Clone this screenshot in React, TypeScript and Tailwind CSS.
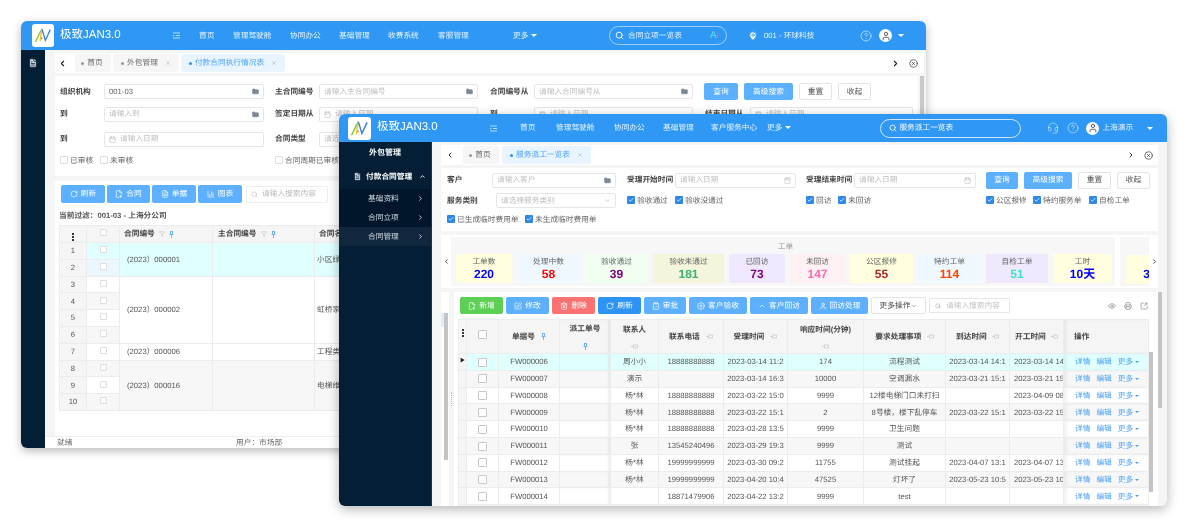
/**
 * Two overlapping ERP windows (contract report behind, service dispatch list in front)
 */

import type { ReactNode } from 'react';
import {
    Calendar,
    ChevronDown,
    ChevronLeft,
    ChevronRight,
    ChevronUp,
    CircleHelp,
    Eye,
    FilePlus2,
    FileText,
    Folder,
    CirclePlus,
    ClipboardCheck,
    Trash2,
    Printer,
    RotateCw,
    Search,
    SquareArrowOutUpRight,
    SquarePen,
    User,
    BarChart3,
    MapPin,
    Filter,
    Check,
    CircleX,
    X,
    Headset,
} from 'lucide-react';

function Logo({ size }: { size: string }) {
    return (
        <div className={`${size} shrink-0 rounded-[3px] bg-white flex items-center justify-center`}>
            <svg viewBox="0 0 24 24" className="w-[90%] h-[90%]" fill="none">
                <path d="M3 20 C6 14 8 9 11 4" stroke="#8cc63f" strokeWidth="1.7" />
                <path d="M10.5 5 C9.5 10 9.5 14 8.5 19" stroke="#f0c419" strokeWidth="1.6" />
                <circle cx="10.5" cy="15.5" r="1.1" fill="#f07a20" />
                <path d="M11 5 L15 18 C17 14 19 9 21 5" stroke="#3b86dd" strokeWidth="1.7" />
            </svg>
        </div>
    );
}

function Avatar() {
    return (
        <div className="w-[13px] h-[13px] rounded-full bg-white flex items-center justify-center">
            <User size={10} strokeWidth={2.2} className="text-[#555]" />
        </div>
    );
}

function Caret() {
    return <span className="inline-block w-0 h-0 border-x-[3px] border-x-transparent border-t-[3px] border-t-white" />;
}

function MenuIcon() {
    return (
        <svg width="7" height="7" viewBox="0 0 7 7" stroke="#d8ecff" strokeWidth="0.8">
            <path d="M0 1h7M3 3.5h4M0 3.5h1.5M0 6h7" />
        </svg>
    );
}

function PinIcon() {
    return (
        <svg width="5" height="7" viewBox="0 0 5 7" fill="none" stroke="#58a6ee" strokeWidth="0.8" className="inline-block">
            <path d="M1 .5h3M1.5.5v3M3.5.5v3M.5 3.5h4M2.5 3.5V7" />
        </svg>
    );
}

function UnpinIcon() {
    return (
        <svg width="7" height="5" viewBox="0 0 7 5" fill="none" stroke="#c4c4c4" strokeWidth="0.7" className="inline-block">
            <path d="M0 2.5h2.5M2.5 1h4v3h-4z" />
        </svg>
    );
}

function DotsIcon() {
    return (
        <span className="inline-flex flex-col gap-[1px]">
            <span className="w-[2px] h-[2px] bg-[#333]" />
            <span className="w-[2px] h-[2px] bg-[#333]" />
            <span className="w-[2px] h-[2px] bg-[#333]" />
        </span>
    );
}

function Tab({ label, closable, active, width }: { label: string; closable?: boolean; active?: boolean; width: string }) {
    return (
        <div
            className={`${width} h-[18px] rounded-[3px] flex items-center justify-center gap-[3px] text-[7.7px] ${active ? 'bg-[#e8f4ff] text-[#4aa3f5]' : 'bg-[#f6f6f6] text-[#666]'}`}
        >
            <span className={`w-[3px] h-[3px] rounded-full ${active ? 'bg-[#2d94f3]' : 'bg-[#999]'}`} />
            <span className="mr-[2px]">{label}</span>
            {closable && <X size={6} className="text-[#aaa] ml-[2px]" />}
        </div>
    );
}

function Field({
    width,
    placeholder,
    icon,
    value,
}: {
    width: string;
    placeholder?: string;
    icon?: 'folder' | 'date' | 'down' | 'leading';
    value?: string;
}) {
    return (
        <div className={`${width} h-[15px] shrink-0 rounded-[2px] border border-[#e6e6e6] bg-white px-[4px] flex items-center gap-[4px] text-[7.7px]`}>
            {icon === 'leading' && <Calendar size={7} className="text-[#bbb] shrink-0" />}
            <span className={`flex-1 truncate ${value ? 'text-[#666]' : 'text-[#c0c0c0]'}`}>{value ?? placeholder}</span>
            {icon === 'folder' && <Folder size={7} fill="#7c8794" className="text-[#7c8794] shrink-0" />}
            {icon === 'date' && <Calendar size={7} className="text-[#bbb] shrink-0" />}
            {icon === 'down' && <ChevronDown size={7} className="text-[#aaa] shrink-0" />}
        </div>
    );
}

function Label({ children, width }: { children: ReactNode; width: string }) {
    return <div className={`${width} shrink-0 text-[7.7px] font-bold text-[#444] whitespace-nowrap`}>{children}</div>;
}

function Btn({
    width,
    tone = 'light',
    height = 'h-[17px]',
    icon,
    children,
}: {
    width: string;
    tone?: 'light' | 'white' | 'green' | 'red' | 'blue';
    height?: string;
    icon?: ReactNode;
    children: ReactNode;
}) {
    const tones = {
        light: 'bg-[#5cb0fd] text-white',
        white: 'bg-white border border-[#e4e4e4] text-[#555]',
        green: 'bg-[#5dcf55] text-white',
        red: 'bg-[#fb7272] text-white',
        blue: 'bg-[#2d94f3] text-white',
    };
    return (
        <div className={`${width} ${height} ${tones[tone]} shrink-0 rounded-[2px] flex items-center justify-center gap-[3px] text-[7.7px]`}>
            {icon}
            {children}
        </div>
    );
}

function Box({ checked, size = 'w-[8px] h-[8px]' }: { checked?: boolean; size?: string }) {
    if (checked) {
        return (
            <span className="w-[8px] h-[8px] shrink-0 rounded-[1px] bg-[#2d89e8] flex items-center justify-center">
                <Check size={6} strokeWidth={3} className="text-white" />
            </span>
        );
    }
    return <span className={`${size} shrink-0 inline-block rounded-[1px] border border-[#dedede] bg-white`} />;
}

function Check2({ label, checked = true, width }: { label: string; checked?: boolean; width?: string }) {
    return (
        <div className={`${width ?? ''} flex items-center gap-[2px] text-[7.7px] text-[#666] whitespace-nowrap`}>
            <Box checked={checked} />
            <span>{label}</span>
        </div>
    );
}

const BACK_NAV = [
    ['首页', 'w-[34px]'],
    ['管理驾驶舱', 'w-[57px]'],
    ['协同办公', 'w-[49px]'],
    ['基础管理', 'w-[49px]'],
    ['收费系统', 'w-[50px]'],
    ['客服管理', 'w-[48px]'],
];

const BACK_GROUPS = [
    { rows: [1, 2], code: '(2023）000001', name: '小区绿', tone: 'bg-[#e0ffff]' },
    { rows: [3, 4, 5, 6], code: '(2023）000002', name: '虹桥家', tone: 'bg-white' },
    { rows: [7], code: '(2023）000006', name: '工程类', tone: 'bg-white' },
    { rows: [8, 9, 10], code: '(2023）000016', name: '电梯维', tone: 'bg-[#f7f7f7]' },
];

function BackWindow() {
    return (
        <div className="absolute left-[21px] top-[21px] w-[905px] h-[427px] rounded-[6px] overflow-hidden bg-[#f5f5f5] shadow-[0_3px_10px_rgba(0,0,0,0.28)] flex flex-col">
            <div className="h-[29px] shrink-0 bg-[#2e98f4] flex items-center text-white">
                <div className="ml-[11px]">
                    <Logo size="w-[22px] h-[23px]" />
                </div>
                <div className="ml-[6px] w-[110px] text-[11.5px] whitespace-nowrap">极致JAN3.0</div>
                <div className="w-[15px] ml-[3px] flex">
                    <MenuIcon />
                </div>
                <div className="flex text-[7.7px] ml-[11px] text-[#e8f4ff]">
                    {BACK_NAV.map(([name, w]) => (
                        <div key={name} className={w}>{name}</div>
                    ))}
                </div>
                <div className="ml-[27px] w-[54px] flex items-center gap-[3px] text-[7.7px] text-[#e8f4ff]">更多<Caret /></div>
                <div className="ml-[42px] w-[118px] h-[19px] rounded-full border border-[#9ccdf8] flex items-center px-[5px] gap-[4px] text-[7.7px]">
                    <Search size={9} strokeWidth={2.4} />
                    <span className="flex-1 text-[#e8f4ff]">合同立项一览表</span>
                    <span className="text-[10px] text-[#5fe0e8] mr-[2px]">A<span className="text-[#e86a8a]">i</span></span>
                </div>
                <MapPin size={10} fill="white" className="ml-[21px] text-[#2e98f4]" />
                <span className="ml-[6px] w-[96px] text-[7.7px] text-[#e8f4ff]">001 - 环球科技</span>
                <CircleHelp size={12} strokeWidth={1.3} className="text-[#e8f4ff]" />
                <div className="ml-[7px]"><Avatar /></div>
                <div className="ml-[6px] flex"><Caret /></div>
            </div>

            <div className="flex-1 flex min-h-0">
                <div className="w-[24px] shrink-0 bg-[#041e36] flex justify-center pt-[8px]">
                    <FileText size={10} fill="#dfe6ee" className="text-[#041e36]" />
                </div>

                <div className="flex-1 min-w-0 flex flex-col">
                    <div className="flex-1 min-h-0 pl-[10px] pr-[2px] pt-[3px] flex flex-col">
                        <div className="h-[20px] w-[869px] shrink-0 bg-white flex items-center">
                            <ChevronLeft size={9} strokeWidth={3} className="ml-[3px] mr-[8px] text-[#222]" />
                            <div className="flex gap-[2px]">
                                <Tab label="首页" width="w-[36px]" />
                                <Tab label="外包管理" width="w-[66px]" closable />
                                <Tab label="付款合同执行情况表" width="w-[104px]" closable active />
                            </div>
                            <div className="flex-1" />
                            <ChevronRight size={9} strokeWidth={3} className="mr-[9px] text-[#222]" />
                            <CircleX size={9} className="mr-[6px] text-[#444]" />
                        </div>

                        <div className="mt-[3px] flex-1 min-h-0 flex">
                            <div className="w-[863px] flex flex-col">
                                <div className="h-[100px] shrink-0 bg-white pl-[5px] pt-[6px] flex flex-col">
                                    <div className="flex items-center h-[19px]">
                                        <Label width="w-[44px]">组织机构</Label>
                                        <Field width="w-[160px]" value="001-03" icon="folder" />
                                        <Label width="w-[44px] ml-[11px]">主合同编号</Label>
                                        <Field width="w-[159px]" placeholder="请输入主合同编号" icon="folder" />
                                        <Label width="w-[44px] ml-[12px]">合同编号从</Label>
                                        <Field width="w-[159px]" placeholder="请输入合同编号从" icon="folder" />
                                        <div className="ml-[11px] flex gap-[6px] items-center">
                                            <Btn width="w-[34px]">查询</Btn>
                                            <Btn width="w-[49px]">高级搜索</Btn>
                                            <Btn width="w-[33px]" tone="white">重置</Btn>
                                            <Btn width="w-[33px]" tone="white">收起</Btn>
                                        </div>
                                    </div>
                                    <div className="flex items-center h-[24px] mt-[1px]">
                                        <Label width="w-[44px]">到</Label>
                                        <Field width="w-[160px]" placeholder="请输入到" icon="folder" />
                                        <Label width="w-[44px] ml-[11px]">签定日期从</Label>
                                        <Field width="w-[159px]" placeholder="请输入日期" icon="leading" />
                                        <Label width="w-[44px] ml-[12px]">到</Label>
                                        <Field width="w-[159px]" placeholder="请输入日期" icon="leading" />
                                        <Label width="w-[45px] ml-[12px]">结束日期从</Label>
                                        <Field width="w-[163px]" placeholder="请输入日期" icon="leading" />
                                    </div>
                                    <div className="flex items-center h-[24px] mt-[1px]">
                                        <Label width="w-[44px]">到</Label>
                                        <Field width="w-[160px]" placeholder="请输入日期" icon="leading" />
                                        <Label width="w-[44px] ml-[11px]">合同类型</Label>
                                        <Field width="w-[159px]" placeholder="请选择" />
                                    </div>
                                    <div className="flex items-center h-[17px] mt-[1px]">
                                        <Check2 label="已审核" checked={false} width="w-[40px]" />
                                        <Check2 label="未审核" checked={false} width="w-[175px]" />
                                        <Check2 label="合同周期已审核" checked={false} />
                                    </div>
                                </div>

                                <div className="mt-[5px] flex-1 min-h-0 bg-white pl-[6px] pt-[4px]">
                                    <div className="flex items-center gap-[2px]">
                                        <Btn width="w-[44px]" height="h-[18px]" icon={<RotateCw size={8} />}>刷新</Btn>
                                        <Btn width="w-[43px]" height="h-[18px]" icon={<FilePlus2 size={8} />}>合同</Btn>
                                        <Btn width="w-[44px]" height="h-[18px]" icon={<FileText size={8} />}>单据</Btn>
                                        <Btn width="w-[44px]" height="h-[18px]" icon={<BarChart3 size={8} />}>图表</Btn>
                                        <div className="ml-[2px] w-[82px] h-[17px] border border-[#eee] rounded-[2px] flex items-center gap-[4px] px-[4px] text-[7.7px] text-[#bbb]">
                                            <Search size={7} />
                                            请输入搜索内容
                                        </div>
                                    </div>
                                    <div className="mt-[6px] h-[13px] text-[7.7px] font-bold text-[#555] -ml-[2px] flex items-center">当前过滤：001-03 - 上海分公司</div>
                                    <table className="mt-[3px] -ml-[2px] table-fixed border-collapse text-[7.7px] text-[#555]">
                                        <colgroup>
                                            <col className="w-[27px]" />
                                            <col className="w-[33px]" />
                                            <col className="w-[93px]" />
                                            <col className="w-[102px]" />
                                            <col className="w-[80px]" />
                                        </colgroup>
                                        <thead>
                                            <tr className="h-[17px] bg-[#f5f5f5]">
                                                <th className="border border-[#ececec]"><DotsIcon /></th>
                                                <th className="border border-[#ececec]"><Box size="w-[7px] h-[7px]" /></th>
                                                <th className="border border-[#ececec] text-left pl-[4px] font-bold text-[#444]">合同编号 <Filter size={6} className="inline text-[#bbb] mx-[2px]" /> <PinIcon /></th>
                                                <th className="border border-[#ececec] text-left pl-[5px] font-bold text-[#444]">主合同编号 <Filter size={6} className="inline text-[#bbb] mx-[2px]" /> <PinIcon /></th>
                                                <th className="border border-[#ececec] text-left pl-[4px] font-bold text-[#444]">合同名称</th>
                                            </tr>
                                        </thead>
                                        <tbody>
                                            {BACK_GROUPS.flatMap((g) =>
                                                g.rows.map((n, i) => (
                                                    <tr key={n} className="h-[16.8px]">
                                                        <td className="border border-[#ececec] bg-[#f5f5f5] text-center">{n}</td>
                                                        <td className={`border border-[#ececec] text-center ${n === 1 ? 'bg-[#e0ffff]' : n === 2 ? 'bg-[#ebf6ff]' : n % 2 === 0 ? 'bg-[#f7f7f7]' : 'bg-white'}`}>
                                                            <Box size="w-[7px] h-[7px]" />
                                                        </td>
                                                        {i === 0 && (
                                                            <>
                                                                <td rowSpan={g.rows.length} className={`border border-[#ececec] pl-[7px] ${g.tone}`}>{g.code}</td>
                                                                <td rowSpan={g.rows.length} className={`border border-[#ececec] ${g.tone}`} />
                                                                <td rowSpan={g.rows.length} className={`border border-[#ececec] pl-[2px] ${g.tone}`}>{g.name}</td>
                                                            </>
                                                        )}
                                                    </tr>
                                                ))
                                            )}
                                        </tbody>
                                    </table>
                                </div>
                            </div>
                            <div className="ml-[2px] w-[4px] shrink-0"><div className="h-[70px] bg-[#c8c8c8]" /></div>
                        </div>
                    </div>
                    <div className="h-[12px] shrink-0 bg-white border-t border-[#eee] flex items-center pl-[12px] text-[7.7px] text-[#666]">
                        <span className="w-[179px]">就绪</span>
                        <span>用户：市场部</span>
                    </div>
                </div>
            </div>
        </div>
    );
}

const STATS = [
    { label: '工单数', value: '220', color: 'text-[#0000ff]', bg: 'bg-[#ffffe0]', w: 'w-[56px]' },
    { label: '处理中数', value: '58', color: 'text-[#ff0000]', bg: 'bg-[#f0f8ff]', w: 'w-[63px]' },
    { label: '验收通过', value: '39', color: 'text-[#800080]', bg: 'bg-[#f0fff0]', w: 'w-[63px]' },
    { label: '验收未通过', value: '181', color: 'text-[#3cb371]', bg: 'bg-[#f5f5dc]', w: 'w-[71px]' },
    { label: '已回访', value: '73', color: 'text-[#800080]', bg: 'bg-[#f0e8fd]', w: 'w-[56px]' },
    { label: '未回访', value: '147', color: 'text-[#ff69b4]', bg: 'bg-[#fff0f3]', w: 'w-[55px]' },
    { label: '公区报修', value: '55', color: 'text-[#a52a2a]', bg: 'bg-[#ffffe0]', w: 'w-[63px]' },
    { label: '特约工单', value: '114', color: 'text-[#ff4500]', bg: 'bg-[#f0f8ff]', w: 'w-[63px]' },
    { label: '自检工单', value: '51', color: 'text-[#40e0d0]', bg: 'bg-[#f0e8fd]', w: 'w-[62px]' },
    { label: '工时', value: '10天', color: 'text-[#0000ff]', bg: 'bg-[#ffffe0]', w: 'w-[59px]' },
];

const ROWS = [
    ['FW000006', '周小小', '18888888888', '2023-03-14 11:2', '174', '流程测试', '2023-03-14 14:1', '2023-03-14 14'],
    ['FW000007', '演示', '', '2023-03-14 16:3', '10000', '空调漏水', '2023-03-21 15:1', '2023-03-21 15'],
    ['FW000008', '杨*林', '18888888888', '2023-03-22 15:0', '9999', '12楼电梯门口未打扫', '', '2023-04-09 08'],
    ['FW000009', '杨*林', '18888888888', '2023-03-22 15:1', '2', '8号楼，楼下乱停车', '2023-03-22 15:1', '2023-03-22 15'],
    ['FW000010', '杨*林', '18888888888', '2023-03-28 13:5', '9999', '卫生问题', '', ''],
    ['FW000011', '张', '13545240496', '2023-03-29 19:3', '9999', '测试', '', ''],
    ['FW000012', '杨*林', '19999999999', '2023-03-30 09:2', '11755', '测试挂起', '2023-04-07 13:1', '2023-04-07 13'],
    ['FW000013', '杨*林', '19999999999', '2023-04-20 10:4', '47525', '灯坏了', '2023-05-23 10:5', '2023-05-23 10'],
    ['FW000014', '', '18871479906', '2023-04-22 13:2', '9999', 'test', '', ''],
];

const FRONT_NAV = [
    ['首页', 'w-[36px]'],
    ['管理驾驶舱', 'w-[58px]'],
    ['协同办公', 'w-[49px]'],
    ['基础管理', 'w-[48px]'],
    ['客户服务中心', 'w-[56px]'],
];

function Th({ children, shadow }: { children?: ReactNode; shadow?: boolean }) {
    return (
        <th className={`border border-[#ececec] bg-[#f5f5f5] font-bold text-[#444] text-center overflow-hidden whitespace-nowrap ${shadow ? 'shadow-[inset_-2px_0_2px_rgba(0,0,0,0.06)]' : ''}`}>
            {children}
        </th>
    );
}

function FrontTable() {
    return (
        <table className="table-fixed border-collapse w-[690px] text-[7.7px] text-[#555]">
            <colgroup>
                <col className="w-[8px]" />
                <col className="w-[32px]" />
                <col className="w-[61px]" />
                <col className="w-[51px]" />
                <col className="w-[48px]" />
                <col className="w-[65px]" />
                <col className="w-[64px]" />
                <col className="w-[76px]" />
                <col className="w-[82px]" />
                <col className="w-[64px]" />
                <col className="w-[54px]" />
                <col className="w-[85px]" />
            </colgroup>
            <thead>
                <tr className="h-[34px]">
                    <th className="border border-[#ececec] bg-[#f5f5f5] align-top pt-[3px]"><DotsIcon /></th>
                    <Th><span className="inline-block w-[9px] h-[9px] rounded-[1px] border border-[#c8c8c8] bg-white" /></Th>
                    <Th>单据号 <span className="ml-[4px]"><PinIcon /></span></Th>
                    <Th shadow>
                        <div className="flex flex-col items-center gap-[8px]">派工单号<PinIcon /></div>
                    </Th>
                    <Th>
                        <div className="flex flex-col items-center gap-[8px]">联系人<UnpinIcon /></div>
                    </Th>
                    <Th>联系电话 <span className="ml-[4px]"><UnpinIcon /></span></Th>
                    <Th>受理时间 <span className="ml-[4px]"><UnpinIcon /></span></Th>
                    <Th>
                        <div className="flex flex-col items-center gap-[8px]">响应时间(分钟)<UnpinIcon /></div>
                    </Th>
                    <Th>要求处理事项 <span className="ml-[3px]"><UnpinIcon /></span></Th>
                    <Th>到达时间 <span className="ml-[3px]"><UnpinIcon /></span></Th>
                    <Th>开工时间 <span className="ml-[3px]"><UnpinIcon /></span></Th>
                    <th className="border border-[#ececec] bg-[#f5f5f5] font-bold text-[#444] text-left pl-[10px] shadow-[inset_3px_0_3px_rgba(0,0,0,0.05)]">操作</th>
                </tr>
            </thead>
            <tbody>
                {ROWS.map((r, i) => {
                    const tone = i === 0 ? 'bg-[#e0ffff]' : i % 2 === 1 ? 'bg-[#f7f7f7]' : 'bg-white';
                    return (
                        <tr key={r[0]} className={`h-[16.8px] ${tone}`}>
                            <td className="border border-[#ececec] bg-[#f5f5f5] text-center text-[#222] text-[5px] leading-none">{i === 0 ? '▶' : ''}</td>
                            <td className="border border-[#ececec] text-center"><span className="inline-block w-[9px] h-[9px] rounded-[1px] border border-[#c8c8c8] bg-white align-middle" /></td>
                            <td className="border border-[#ececec] text-center">{r[0]}</td>
                            <td className="border border-[#ececec] shadow-[inset_-2px_0_2px_rgba(0,0,0,0.06)]" />
                            <td className="border border-[#ececec] text-center">{r[1]}</td>
                            <td className="border border-[#ececec] text-center">{r[2]}</td>
                            <td className="border border-[#ececec] text-center overflow-hidden whitespace-nowrap">{r[3]}</td>
                            <td className="border border-[#ececec] text-center">{r[4]}</td>
                            <td className="border border-[#ececec] text-center whitespace-nowrap">{r[5]}</td>
                            <td className="border border-[#ececec] text-center overflow-hidden whitespace-nowrap">{r[6]}</td>
                            <td className="border border-[#ececec] pl-[4px] overflow-hidden whitespace-nowrap">{r[7]}</td>
                            <td className="border border-[#ececec] pl-[11px] text-[#4a9ff0] whitespace-nowrap shadow-[inset_3px_0_3px_rgba(0,0,0,0.05)]">
                                <span>详情</span>
                                <span className="ml-[6px]">编辑</span>
                                <span className="ml-[6px]">更多</span>
                                <span className="ml-[2px] inline-block align-middle w-0 h-0 border-x-[2px] border-x-transparent border-t-[2px] border-t-[#4a9ff0]" />
                            </td>
                        </tr>
                    );
                })}
                <tr className="h-[17px]">
                    <td className="border border-[#ececec] bg-[#f5f5f5]" colSpan={12} />
                </tr>
            </tbody>
        </table>
    );
}

function FrontWindow() {
    return (
        <div className="absolute left-[339px] top-[114px] w-[828px] h-[392px] rounded-[6px] overflow-hidden bg-[#f5f5f5] shadow-[0_3px_12px_rgba(0,0,0,0.3)] flex flex-col">
            <div className="h-[28px] shrink-0 bg-[#2e98f4] flex items-center text-white">
                <div className="ml-[9px]">
                    <Logo size="w-[23px] h-[23px]" />
                </div>
                <div className="ml-[6px] w-[112px] text-[11.5px] whitespace-nowrap">极致JAN3.0</div>
                <div className="w-[25px] ml-[1px] flex"><MenuIcon /></div>
                <div className="flex text-[7.7px] text-[#e8f4ff] ml-[5px]">
                    {FRONT_NAV.map(([name, w]) => (
                        <div key={name} className={w}>{name}</div>
                    ))}
                </div>
                <div className="flex items-center gap-[3px] text-[7.7px] text-[#e8f4ff]">更多<Caret /></div>
                <div className="ml-[89px] w-[141px] h-[19px] rounded-full border border-[#cfe6fb] flex items-center px-[8px] gap-[2px] text-[7.7px]">
                    <Search size={8} strokeWidth={2.5} />
                    <span>服务派工一览表</span>
                </div>
                <Headset size={12} strokeWidth={1.2} className="ml-[26px] text-[#d8ecff]" />
                <CircleHelp size={12} strokeWidth={1.2} className="ml-[8px] text-[#e8f4ff]" />
                <div className="ml-[7px]"><Avatar /></div>
                <span className="ml-[3px] w-[45px] text-[7.7px] text-[#e8f4ff]">上海演示</span>
                <Caret />
            </div>

            <div className="flex-1 min-h-0 flex">
                <div className="w-[93px] shrink-0 bg-[#041e36] text-white flex flex-col border-r border-[#1b3650]">
                    <div className="h-[20px] mt-[1px] flex items-center justify-center text-[8px] font-bold">外包管理</div>
                    <div className="h-[25px] mt-[1px] pl-[14px] flex items-center text-[7.7px] font-bold gap-[4px]">
                        <FileText size={9} fill="#dfe6ee" className="text-[#041e36]" />
                        付款合同管理
                        <ChevronUp size={7} strokeWidth={3} className="ml-[3px]" />
                    </div>
                    <div className="h-[19px] bg-[#02162b] pl-[29px] pr-[7px] flex items-center justify-between text-[7.7px] text-[#d7dee6]">基础资料<ChevronRight size={7} strokeWidth={3} /></div>
                    <div className="h-[19px] bg-[#02162b] pl-[29px] pr-[7px] flex items-center justify-between text-[7.7px] text-[#d7dee6]">合同立项<ChevronRight size={7} strokeWidth={3} /></div>
                    <div className="h-[19px] bg-[#10273e] pl-[29px] pr-[7px] flex items-center justify-between text-[7.7px] text-[#d7dee6]">合同管理<ChevronRight size={7} strokeWidth={3} /></div>
                </div>

                <div className="flex-1 min-w-0 pl-[9px] pt-[3px] flex flex-col">
                    <div className="h-[20px] w-[717px] shrink-0 bg-white flex items-center">
                        <ChevronLeft size={8} strokeWidth={3} className="ml-[5px] mr-[9px] text-[#333]" />
                        <div className="flex gap-[3px]">
                            <Tab label="首页" width="w-[36px]" />
                            <Tab label="服务派工一览表" width="w-[89px]" closable active />
                        </div>
                        <div className="flex-1" />
                        <ChevronRight size={8} strokeWidth={3} className="mr-[9px] text-[#333]" />
                        <CircleX size={9} className="mr-[5px] text-[#444]" />
                    </div>

                    <div className="mt-[3px] h-[63px] w-[717px] shrink-0 bg-white pl-[6px] flex flex-col">
                        <div className="h-[24px] flex items-center">
                            <Label width="w-[45px]">客户</Label>
                            <Field width="w-[124px]" placeholder="请输入客户" icon="folder" />
                            <Label width="w-[48px] ml-[11px]">受理开始时间</Label>
                            <Field width="w-[121px]" placeholder="请输入日期" icon="date" />
                            <Label width="w-[48px] ml-[10px]">受理结束时间</Label>
                            <Field width="w-[122px]" placeholder="请输入日期" icon="date" />
                            <div className="ml-[10px] flex gap-[6px]">
                                <Btn width="w-[32px]">查询</Btn>
                                <Btn width="w-[48px]">高级搜索</Btn>
                                <Btn width="w-[33px]" tone="white">重置</Btn>
                                <Btn width="w-[33px]" tone="white">收起</Btn>
                            </div>
                        </div>
                        <div className="h-[17px] flex items-center">
                            <Label width="w-[49px]">服务类别</Label>
                            <Field width="w-[120px]" placeholder="请选择服务类别" icon="down" />
                            <Check2 label="验收通过" width="w-[48px] ml-[11px]" />
                            <Check2 label="验收没通过" width="w-[131px]" />
                            <Check2 label="回访" width="w-[32px]" />
                            <Check2 label="未回访" width="w-[148px]" />
                            <Check2 label="公区报修" width="w-[47px]" />
                            <Check2 label="特约服务单" width="w-[56px]" />
                            <Check2 label="自检工单" />
                        </div>
                        <div className="h-[21px] flex items-center">
                            <Check2 label="已生成临时费用单" width="w-[78px]" />
                            <Check2 label="未生成临时费用单" />
                        </div>
                    </div>

                    <div className="mt-[4px] h-[53px] w-[717px] shrink-0 bg-white flex items-center">
                        <ChevronLeft size={7} strokeWidth={3} className="ml-[2px] mr-[1px] text-[#333]" />
                        <div className="w-[667px] h-[49px] bg-[#f7f7f7] pl-[5px] flex flex-col">
                            <div className="h-[17px] text-center text-[7.7px] text-[#999] flex items-center justify-center pt-[3px]">工单</div>
                            <div className="flex gap-[5px]">
                                {STATS.map((s) => (
                                    <div key={s.label} className={`${s.w} h-[29px] ${s.bg} flex flex-col items-center justify-center`}>
                                        <div className="text-[7.7px] text-[#666] leading-[10px]">{s.label}</div>
                                        <div className={`text-[12px] font-bold leading-[14px] ${s.color}`}>{s.value}</div>
                                    </div>
                                ))}
                            </div>
                        </div>
                        <div className="ml-[5px] w-[29px] h-[49px] bg-[#f7f7f7] flex flex-col justify-end pb-[2px] overflow-hidden">
                            <div className="ml-[6px] h-[29px] bg-[#ffffe0] pl-[17px] flex items-center overflow-hidden">
                                <span className="text-[12px] font-bold text-[#0000ff] mt-[9px]">3</span>
                            </div>
                        </div>
                        <ChevronRight size={7} strokeWidth={3} className="ml-[2px] text-[#333]" />
                    </div>

                    <div className="mt-[4px] flex-1 min-h-0 flex">
                        <div className="w-[717px] flex">
                            <div className="w-[8px] shrink-0 bg-white flex">
                                <div className="w-[3px] pt-[21px]"><div className="h-[14px] bg-[#dfeeff]" /></div>
                                <div className="w-[4px] pt-[21px]"><div className="h-[147px] bg-[#c4c4c4]" /></div>
                            </div>
                            <div className="w-[5px] shrink-0 flex items-center justify-center">
                                <div className="w-[1px] h-[14px] border-l border-dotted border-[#bbb]" />
                            </div>
                            <div className="flex-1 min-w-0 bg-white pl-[4px] flex flex-col overflow-hidden">
                                <div className="h-[27px] shrink-0 flex items-center gap-[3px] pl-[2px] relative">
                                    <Btn width="w-[43px]" tone="green" height="h-[17px]" icon={<FilePlus2 size={8} />}>新增</Btn>
                                    <Btn width="w-[43px]" height="h-[17px]" icon={<SquarePen size={8} />}>修改</Btn>
                                    <Btn width="w-[43px]" tone="red" height="h-[17px]" icon={<Trash2 size={8} />}>删除</Btn>
                                    <Btn width="w-[43px]" tone="blue" height="h-[17px]" icon={<RotateCw size={8} />}>刷新</Btn>
                                    <Btn width="w-[42px]" height="h-[17px]" icon={<ClipboardCheck size={8} />}>审批</Btn>
                                    <Btn width="w-[58px]" height="h-[17px]" icon={<CirclePlus size={8} />}>客户验收</Btn>
                                    <Btn width="w-[58px]" height="h-[17px]" icon={<ChevronUp size={8} />}>客户回访</Btn>
                                    <Btn width="w-[57px]" height="h-[17px]" icon={<User size={8} />}>回访处理</Btn>
                                    <Btn width="w-[55px]" tone="white" height="h-[17px]">
                                        <span className="font-normal text-[#444]">更多操作</span>
                                        <ChevronDown size={6} className="-ml-[2px]" />
                                    </Btn>
                                    <div className="w-[81px] h-[15px] border border-[#e6e6e6] rounded-[1px] flex items-center gap-[5px] px-[5px] text-[7.7px] text-[#c4c4c4]">
                                        <Search size={6} className="text-[#999]" />
                                        请输入搜索内容
                                    </div>
                                    <div className="flex-1 flex justify-end gap-[8px] pr-[10px] text-[#888]">
                                        <Eye size={8} />
                                        <Printer size={8} />
                                        <SquareArrowOutUpRight size={8} />
                                    </div>
                                </div>
                                <div className="flex">
                                    <FrontTable />
                                    <div className="w-[4px] shrink-0 pt-[33px]"><div className="h-[140px] bg-[#c4c4c4]" /></div>
                                </div>
                            </div>
                        </div>
                        <div className="w-[4px] shrink-0"><div className="h-[116px] bg-[#c4c4c4]" /></div>
                    </div>
                </div>
            </div>
        </div>
    );
}

export default function App() {
    return (
        <div className="relative w-[1188px] h-[523px] overflow-hidden bg-white blur-[0.25px] [text-rendering:geometricPrecision] font-['Liberation_Sans','Noto_Sans_CJK_SC',sans-serif]">
            <BackWindow />
            <FrontWindow />
        </div>
    );
}
